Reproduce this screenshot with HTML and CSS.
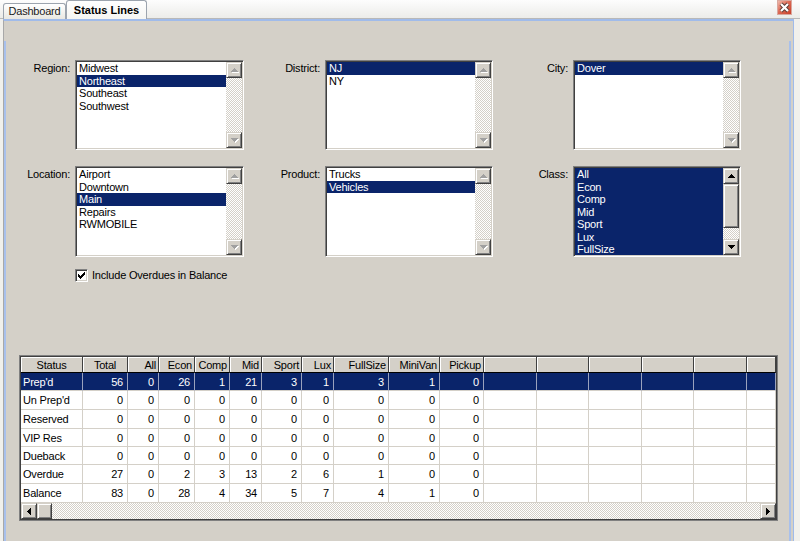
FILE: index.html
```html
<!DOCTYPE html>
<html>
<head>
<meta charset="utf-8">
<link rel="stylesheet" href="styles.css">
</head>
<body>
<div class="tabstrip">
  <div class="tab">Dashboard</div>
  <div class="tab active">Status Lines</div>
  <div class="close"><svg width="13" height="13" viewBox="0 0 13 13"><path d="M3 3L10 10M10 3L3 10" stroke="#5a3a36" stroke-width="4"/><path d="M3 3L10 10M10 3L3 10" stroke="#fff" stroke-width="2.2"/></svg></div>
</div>
<div class="tabpage">
  <div class="panel">
    <div class="filters">
      <div class="lbl">Region:</div>
      <div class="listbox">
        <div class="items">
          <div class="item">Midwest</div>
          <div class="item sel">Northeast</div>
          <div class="item">Southeast</div>
          <div class="item">Southwest</div>
        </div>
        <div class="vscroll">
          <div class="btn dis"><svg width="7" height="4" viewBox="0 0 7 4"><path d="M3 0h1v1h1v1h1v1h1v1H0V3h1V2h1V1h1z"/></svg></div>
          <div class="track"></div>
          <div class="btn dis"><svg width="7" height="4" viewBox="0 0 7 4"><path d="M0 0h7v1H6v1H5v1H4v1H3V3H2V2H1V1H0z"/></svg></div>
        </div>
      </div>
      <div class="lbl">District:</div>
      <div class="listbox">
        <div class="items">
          <div class="item sel">NJ</div>
          <div class="item">NY</div>
        </div>
        <div class="vscroll">
          <div class="btn dis"><svg width="7" height="4" viewBox="0 0 7 4"><path d="M3 0h1v1h1v1h1v1h1v1H0V3h1V2h1V1h1z"/></svg></div>
          <div class="track"></div>
          <div class="btn dis"><svg width="7" height="4" viewBox="0 0 7 4"><path d="M0 0h7v1H6v1H5v1H4v1H3V3H2V2H1V1H0z"/></svg></div>
        </div>
      </div>
      <div class="lbl">City:</div>
      <div class="listbox">
        <div class="items">
          <div class="item sel">Dover</div>
        </div>
        <div class="vscroll">
          <div class="btn dis"><svg width="7" height="4" viewBox="0 0 7 4"><path d="M3 0h1v1h1v1h1v1h1v1H0V3h1V2h1V1h1z"/></svg></div>
          <div class="track"></div>
          <div class="btn dis"><svg width="7" height="4" viewBox="0 0 7 4"><path d="M0 0h7v1H6v1H5v1H4v1H3V3H2V2H1V1H0z"/></svg></div>
        </div>
      </div>

      <div class="lbl">Location:</div>
      <div class="listbox">
        <div class="items">
          <div class="item">Airport</div>
          <div class="item">Downtown</div>
          <div class="item sel">Main</div>
          <div class="item">Repairs</div>
          <div class="item">RWMOBILE</div>
        </div>
        <div class="vscroll">
          <div class="btn dis"><svg width="7" height="4" viewBox="0 0 7 4"><path d="M3 0h1v1h1v1h1v1h1v1H0V3h1V2h1V1h1z"/></svg></div>
          <div class="track"></div>
          <div class="btn dis"><svg width="7" height="4" viewBox="0 0 7 4"><path d="M0 0h7v1H6v1H5v1H4v1H3V3H2V2H1V1H0z"/></svg></div>
        </div>
      </div>
      <div class="lbl">Product:</div>
      <div class="listbox">
        <div class="items">
          <div class="item">Trucks</div>
          <div class="item sel">Vehicles</div>
        </div>
        <div class="vscroll">
          <div class="btn dis"><svg width="7" height="4" viewBox="0 0 7 4"><path d="M3 0h1v1h1v1h1v1h1v1H0V3h1V2h1V1h1z"/></svg></div>
          <div class="track"></div>
          <div class="btn dis"><svg width="7" height="4" viewBox="0 0 7 4"><path d="M0 0h7v1H6v1H5v1H4v1H3V3H2V2H1V1H0z"/></svg></div>
        </div>
      </div>
      <div class="lbl">Class:</div>
      <div class="listbox">
        <div class="items">
          <div class="item sel">All</div>
          <div class="item sel">Econ</div>
          <div class="item sel">Comp</div>
          <div class="item sel">Mid</div>
          <div class="item sel">Sport</div>
          <div class="item sel">Lux</div>
          <div class="item sel">FullSize</div>
        </div>
        <div class="vscroll">
          <div class="btn"><svg width="7" height="4" viewBox="0 0 7 4"><path d="M3 0h1v1h1v1h1v1h1v1H0V3h1V2h1V1h1z"/></svg></div>
          <div class="thumb"></div>
          <div class="track"></div>
          <div class="btn"><svg width="7" height="4" viewBox="0 0 7 4"><path d="M0 0h7v1H6v1H5v1H4v1H3V3H2V2H1V1H0z"/></svg></div>
        </div>
      </div>
    </div>

    <div class="check-row">
      <div class="checkbox"><svg width="7" height="7" viewBox="0 0 7 7"><path d="M0 2h1v1h1v1h1V3h1V2h1V1h1V0h1v3H6v1H5v1H4v1H3v1H2V6H1V5H0z"/></svg></div>
      <span class="check-label">Include Overdues in Balance</span>
    </div>

    <div class="grid">
      <div class="row">
        <div class="h ctr">Status</div><div class="h ctr">Total</div><div class="h">All</div><div class="h">Econ</div><div class="h">Comp</div><div class="h">Mid</div><div class="h">Sport</div><div class="h">Lux</div><div class="h">FullSize</div><div class="h">MiniVan</div><div class="h">Pickup</div><div class="h"></div><div class="h"></div><div class="h"></div><div class="h"></div><div class="h"></div><div class="h"></div>
      </div>
      <div class="row sel">
        <div class="c s">Prep'd</div><div class="c">56</div><div class="c">0</div><div class="c">26</div><div class="c">1</div><div class="c">21</div><div class="c">3</div><div class="c">1</div><div class="c">3</div><div class="c">1</div><div class="c">0</div><div class="c"></div><div class="c"></div><div class="c"></div><div class="c"></div><div class="c"></div><div class="c"></div>
      </div>
      <div class="row">
        <div class="c s">Un Prep'd</div><div class="c">0</div><div class="c">0</div><div class="c">0</div><div class="c">0</div><div class="c">0</div><div class="c">0</div><div class="c">0</div><div class="c">0</div><div class="c">0</div><div class="c">0</div><div class="c"></div><div class="c"></div><div class="c"></div><div class="c"></div><div class="c"></div><div class="c"></div>
      </div>
      <div class="row">
        <div class="c s">Reserved</div><div class="c">0</div><div class="c">0</div><div class="c">0</div><div class="c">0</div><div class="c">0</div><div class="c">0</div><div class="c">0</div><div class="c">0</div><div class="c">0</div><div class="c">0</div><div class="c"></div><div class="c"></div><div class="c"></div><div class="c"></div><div class="c"></div><div class="c"></div>
      </div>
      <div class="row">
        <div class="c s">VIP Res</div><div class="c">0</div><div class="c">0</div><div class="c">0</div><div class="c">0</div><div class="c">0</div><div class="c">0</div><div class="c">0</div><div class="c">0</div><div class="c">0</div><div class="c">0</div><div class="c"></div><div class="c"></div><div class="c"></div><div class="c"></div><div class="c"></div><div class="c"></div>
      </div>
      <div class="row">
        <div class="c s">Dueback</div><div class="c">0</div><div class="c">0</div><div class="c">0</div><div class="c">0</div><div class="c">0</div><div class="c">0</div><div class="c">0</div><div class="c">0</div><div class="c">0</div><div class="c">0</div><div class="c"></div><div class="c"></div><div class="c"></div><div class="c"></div><div class="c"></div><div class="c"></div>
      </div>
      <div class="row">
        <div class="c s">Overdue</div><div class="c">27</div><div class="c">0</div><div class="c">2</div><div class="c">3</div><div class="c">13</div><div class="c">2</div><div class="c">6</div><div class="c">1</div><div class="c">0</div><div class="c">0</div><div class="c"></div><div class="c"></div><div class="c"></div><div class="c"></div><div class="c"></div><div class="c"></div>
      </div>
      <div class="row">
        <div class="c s">Balance</div><div class="c">83</div><div class="c">0</div><div class="c">28</div><div class="c">4</div><div class="c">34</div><div class="c">5</div><div class="c">7</div><div class="c">4</div><div class="c">1</div><div class="c">0</div><div class="c"></div><div class="c"></div><div class="c"></div><div class="c"></div><div class="c"></div><div class="c"></div>
      </div>
      <div class="hscroll">
        <div class="btn"><svg width="4" height="7" viewBox="0 0 4 7"><path d="M3 0h1v7H3V6H2V5H1V4H0V3h1V2h1V1h1z"/></svg></div>
        <div class="hthumb"></div>
        <div class="track"></div>
        <div class="btn"><svg width="4" height="7" viewBox="0 0 4 7"><path d="M0 0h1v1h1v1h1v1h1v1H3v1H2v1H1v1H0z"/></svg></div>
      </div>
    </div>
  </div>
</div>
</body>
</html>
```

FILE: styles.css
```css
html, body {
  margin: 0;
  padding: 0;
}

body {
  background: #f1f0ec;
  font-family: "Liberation Sans", Arial, sans-serif;
  font-size: 11px;
  letter-spacing: -0.2px;
  color: #000;
  height: 541px;
  overflow: hidden;
}

/* ---------- tab strip ---------- */
.tabstrip {
  display: flex;
  align-items: flex-end;
  height: 19px;
  padding-left: 3px;
  background: linear-gradient(#fdfdfd, #ebebe8);
  box-shadow: inset 0 -1px #b8b8b8;
}

.tab {
  box-sizing: border-box;
  width: 63px;
  height: 16px;
  border: 1px solid #9ca4ae;
  border-bottom: 0;
  border-radius: 3px 3px 0 0;
  background: linear-gradient(#ffffff, #e9e8e2);
  text-align: center;
  line-height: 15px;
  color: #1a1a1a;
}

.tab.active {
  width: 81px;
  height: 19px;
  line-height: 18px;
  font-weight: bold;
  letter-spacing: 0;
  background: linear-gradient(#ffffff, #f5f5f2);
  color: #000;
}

.close {
  margin-left: auto;
  margin-right: 8px;
  align-self: flex-start;
  box-sizing: border-box;
  width: 15px;
  height: 15px;
  border: 1px solid #d9a79e;
  background: linear-gradient(135deg, #f0b8aa 0%, #dc6a55 45%, #c9412b 100%);
  display: flex;
  align-items: center;
  justify-content: center;
}

/* ---------- tab page ---------- */
.tabpage {
  box-sizing: border-box;
  margin-left: 3px;
  width: 791px;
  height: 522px;
  border-top: 2px solid #a0bbea;
  border-left: 1px solid #a8a8a8;
  border-right: 1px solid #a0bbea;
  background: #d4d0c8;
}

.panel {
  box-sizing: border-box;
  margin-top: 20px;
  margin-right: 2px;
  height: 500px;
  border-left: 2px solid #a8c0ec;
  border-right: 2px solid #a8c0ec;
}

/* ---------- filter list boxes ---------- */
.filters {
  display: grid;
  grid-template-columns: 69px 169px 81px 168px 80px 168px;
  grid-template-rows: 90px 91px;
  row-gap: 16px;
  padding-top: 19px;
}

.lbl {
  text-align: right;
  padding-right: 5px;
  padding-top: 2px;
  line-height: 13px;
}

.listbox {
  box-sizing: border-box;
  display: flex;
  border: 1px solid;
  border-color: #808080 #ffffff #ffffff #808080;
  padding: 1px;
  box-shadow: inset 1px 1px #404040, inset -1px -1px #d4d0c8;
  background: #fff;
}

.items {
  flex: 1;
  overflow: hidden;
  background: #fff;
}

.item {
  height: 12.5px;
  line-height: 12.5px;
  padding-left: 2px;
  white-space: nowrap;
}

.item.sel {
  background: #0a246a;
  color: #fff;
}

.vscroll {
  display: flex;
  flex-direction: column;
  width: 16px;
  flex: none;
}

.track {
  flex: 1;
  background-color: #fff;
  background-image: repeating-conic-gradient(#d4d0c8 0 25%, #ffffff 0 50%);
  background-size: 2px 2px;
}

.btn,
.thumb,
.hthumb {
  box-sizing: border-box;
  width: 16px;
  height: 16px;
  flex: none;
  background: #d4d0c8;
  border: 1px solid;
  border-color: #d4d0c8 #404040 #404040 #d4d0c8;
  box-shadow: inset 1px 1px #ffffff, inset -1px -1px #808080;
  display: flex;
  align-items: center;
  justify-content: center;
  color: #000;
}

.btn svg {
  display: block;
  fill: currentColor;
}

.btn.dis {
  color: #a0a0a0;
}

.btn.dis svg {
  filter: drop-shadow(1px 1px 0 #ffffff);
}

.thumb {
  height: 44px;
}

.hthumb {
  width: 15px;
}

/* ---------- checkbox ---------- */
.check-row {
  display: flex;
  align-items: center;
  height: 13px;
  margin-top: 12px;
  padding-left: 69px;
}

.checkbox {
  box-sizing: border-box;
  width: 13px;
  height: 13px;
  border: 1px solid;
  border-color: #808080 #ffffff #ffffff #808080;
  box-shadow: inset 1px 1px #404040, inset -1px -1px #d4d0c8;
  background: #fff;
  display: flex;
  align-items: center;
  justify-content: center;
}

.checkbox svg {
  display: block;
  fill: #000;
}

.check-label {
  margin-left: 4px;
  line-height: 13px;
}

/* ---------- data grid ---------- */
.grid {
  display: grid;
  grid-template-columns: 62px 45px 31px 36px 35px 32px 40px 32px 55px 51px 44px 53px 52px 53px 52px 53px 29px;
  grid-template-rows: 16px 18px 19px 19px 18px 18px 19px 19px 16px;
  width: 755px;
  margin: 73px 0 0 13px;
  border: 1px solid #808080;
  outline: 1px solid transparent;
  box-shadow: inset 0 0 0 1px #404040;
  padding: 1px;
  background: #fff;
}

.row {
  display: contents;
}

.h,
.c {
  box-sizing: border-box;
  display: flex;
  align-items: center;
  justify-content: flex-end;
  white-space: nowrap;
  overflow: hidden;
}

.h {
  background: #d4d0c8;
  border-right: 1px solid #404040;
  border-bottom: 1px solid #000;
  box-shadow: inset 1px 1px #ffffff;
  padding-right: 2px;
}

.h.ctr {
  justify-content: center;
  padding-right: 0;
}

.c {
  background: #fff;
  border-right: 1px solid #d4d0c8;
  border-bottom: 1px solid #d4d0c8;
  padding-right: 4px;
}

.c.s {
  justify-content: flex-start;
  padding-left: 2px;
  padding-right: 0;
}

.row.sel .c {
  background: #0a246a;
  color: #fff;
  border-right-color: #9aa2bd;
}

.hscroll {
  grid-column: 1 / -1;
  display: flex;
}
```
